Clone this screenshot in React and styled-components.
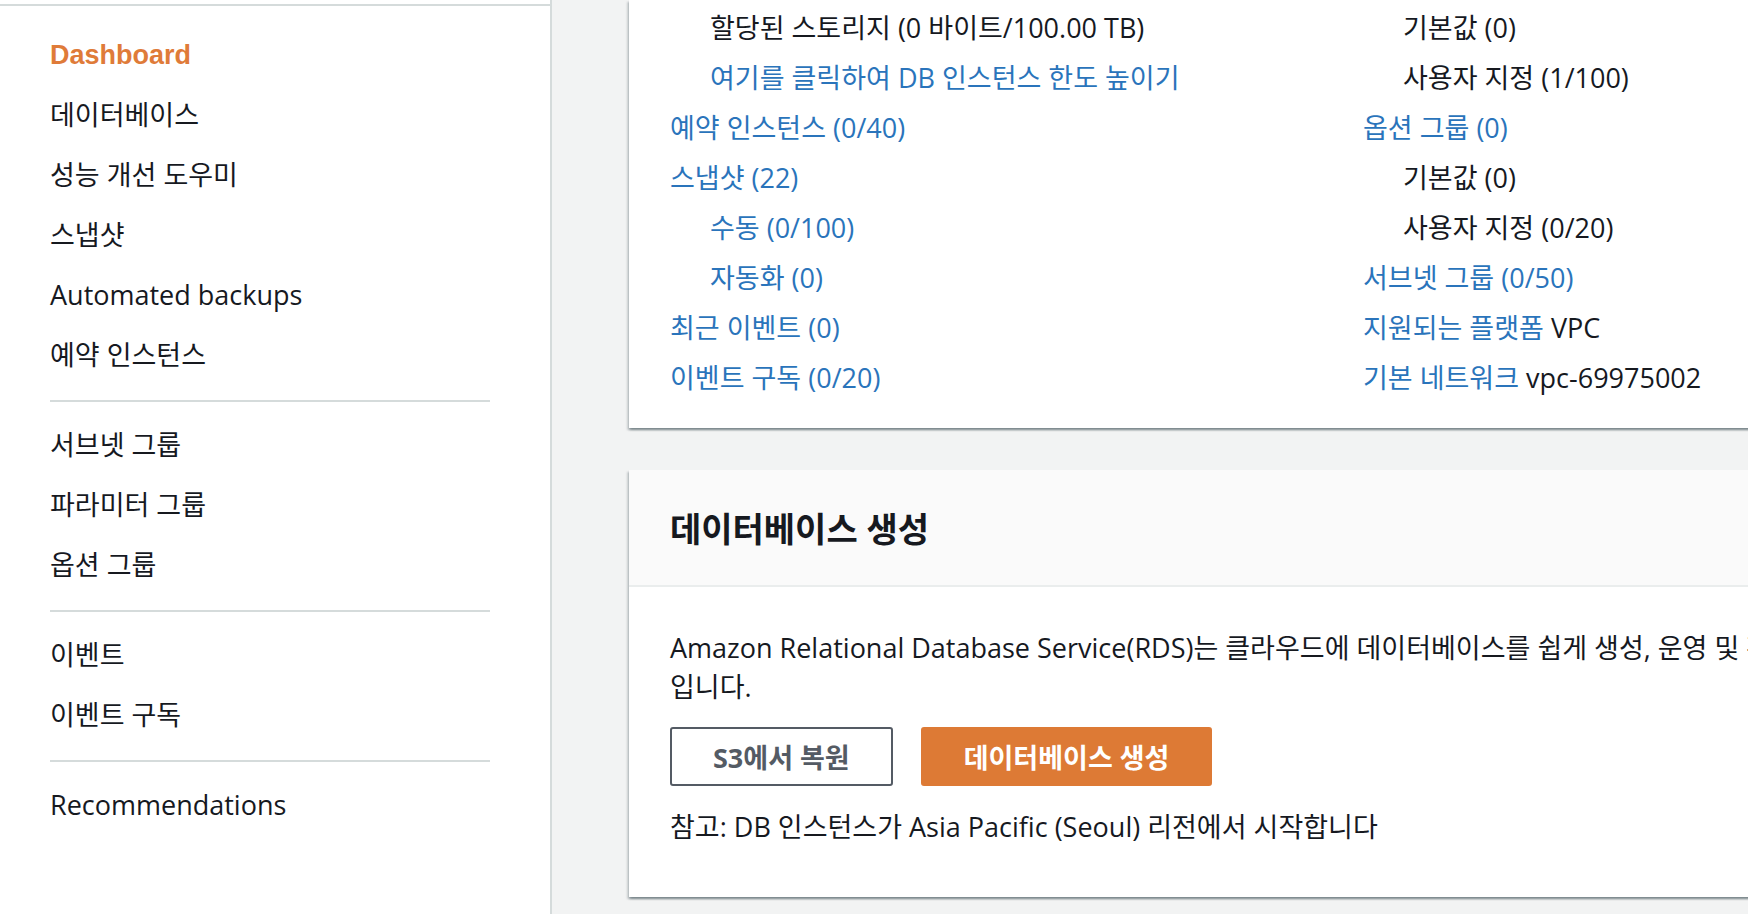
import React from 'react'
import styled, { createGlobalStyle } from 'styled-components'

const GlobalStyle = createGlobalStyle`
  html, body {
    margin: 0;
    padding: 0;
    overflow: hidden;
    background: #f2f3f3;
  }
  body {
    font-family: "Open Sans", "Noto Sans CJK KR", sans-serif;
    color: #16191f;
  }
`

const Page = styled.div`
  display: flex;
  height: 914px;
  width: 100%;
`

const Sidebar = styled.nav`
  flex: 0 0 550px;
  background: #fff;
  border-right: 2px solid #d5dbdb;
  padding-top: 4px;
`

const SidebarTopLine = styled.div`
  height: 2px;
  background: #d5dbdb;
`

const NavList = styled.ul`
  list-style: none;
  margin: 0;
  padding: 19px 60px 0 50px;
`

const NavItem = styled.li`
  height: 60px;
  line-height: 60px;
  font-size: 27px;
  white-space: nowrap;
  color: ${p => (p.$active ? '#df7b39' : '#16191f')};
  font-weight: ${p => (p.$active ? 700 : 400)};
  font-family: ${p => (p.$active ? '"Liberation Sans", "Noto Sans CJK KR", sans-serif' : 'inherit')};
`

const NavDivider = styled.li`
  height: 2px;
  background: #d5dbdb;
  margin: 15px 0 13px;
`

const Main = styled.main`
  flex: 1;
  min-width: 0;
  padding-left: 77px;
  overflow: hidden;
`

const Card = styled.section`
  width: 1500px;
  background: #fff;
  box-shadow: 0 2px 2px 0 rgba(0, 28, 36, 0.3), 2px 2px 2px 0 rgba(0, 28, 36, 0.15),
    -2px 2px 2px 0 rgba(0, 28, 36, 0.15);
  margin-bottom: 42px;
`

const ResourceGrid = styled.div`
  display: grid;
  grid-template-columns: 693px 1fr;
  padding: 3px 0 25px 41px;
`

const Column = styled.div`
  display: flex;
  flex-direction: column;
`

const Row = styled.div`
  height: 50px;
  line-height: 50px;
  font-size: 27px;
  white-space: nowrap;
  padding-left: ${p => (p.$indent ? '40px' : '0')};
`

const Link = styled.a`
  color: #2a74bb;
  text-decoration: none;
  cursor: pointer;
`

const CardHeader = styled.header`
  height: 115px;
  display: flex;
  align-items: center;
  padding-left: 41px;
  background: #fafafa;
  border-bottom: 2px solid #eaeded;
`

const CardTitle = styled.h2`
  margin: 0;
  font-size: 34px;
  font-weight: 700;
  color: #16191f;
`

const CardBody = styled.div`
  padding: 41px 0 50px 41px;
`

const Description = styled.p`
  margin: 0;
  font-size: 27px;
  line-height: 39px;
  white-space: nowrap;
`

const Actions = styled.div`
  display: flex;
  gap: 28px;
  margin: 21px 0;
`

const Button = styled.button`
  height: 59px;
  padding: 0 41px;
  border-radius: 3px;
  font-family: inherit;
  font-size: 27px;
  font-weight: 700;
  cursor: pointer;
  border: 2px solid ${p => (p.$primary ? '#dd7a35' : '#545b64')};
  background: ${p => (p.$primary ? '#dd7a35' : '#fff')};
  color: ${p => (p.$primary ? '#fff' : '#545b64')};
`

const Note = styled.p`
  margin: 0;
  font-size: 27px;
  line-height: 40px;
  white-space: nowrap;
`

const navGroups = [
  ['Dashboard', '데이터베이스', '성능 개선 도우미', '스냅샷', 'Automated backups', '예약 인스턴스'],
  ['서브넷 그룹', '파라미터 그룹', '옵션 그룹'],
  ['이벤트', '이벤트 구독'],
  ['Recommendations'],
]

const leftRows = [
  { text: '할당된 스토리지 (0 바이트/100.00 TB)', indent: true },
  { link: '여기를 클릭하여 DB 인스턴스 한도 높이기', indent: true },
  { link: '예약 인스턴스 (0/40)' },
  { link: '스냅샷 (22)' },
  { link: '수동 (0/100)', indent: true },
  { link: '자동화 (0)', indent: true },
  { link: '최근 이벤트 (0)' },
  { link: '이벤트 구독 (0/20)' },
]

const rightRows = [
  { text: '기본값 (0)', indent: true },
  { text: '사용자 지정 (1/100)', indent: true },
  { link: '옵션 그룹 (0)' },
  { text: '기본값 (0)', indent: true },
  { text: '사용자 지정 (0/20)', indent: true },
  { link: '서브넷 그룹 (0/50)' },
  { link: '지원되는 플랫폼', text: ' VPC' },
  { link: '기본 네트워크', text: ' vpc-69975002' },
]

const ResourceRow = ({ row }) => (
  <Row $indent={row.indent}>
    {row.link && <Link>{row.link}</Link>}
    {row.text}
  </Row>
)

const App = () => {
  return (
    <>
      <GlobalStyle />
      <Page>
        <Sidebar>
          <SidebarTopLine />
          <NavList>
            {navGroups.map((group, gi) => (
              <React.Fragment key={gi}>
                {gi > 0 && <NavDivider />}
                {group.map(item => (
                  <NavItem key={item} $active={item === 'Dashboard'}>
                    {item}
                  </NavItem>
                ))}
              </React.Fragment>
            ))}
          </NavList>
        </Sidebar>
        <Main>
          <Card>
            <ResourceGrid>
              <Column>
                {leftRows.map((r, i) => <ResourceRow key={i} row={r} />)}
              </Column>
              <Column>
                {rightRows.map((r, i) => <ResourceRow key={i} row={r} />)}
              </Column>
            </ResourceGrid>
          </Card>
          <Card>
            <CardHeader>
              <CardTitle>데이터베이스 생성</CardTitle>
            </CardHeader>
            <CardBody>
              <Description>
                Amazon Relational Database Service(RDS)는 클라우드에 데이터베이스를 쉽게 생성, 운영 및 확장할 수 있게 해주는 웹 서비스
                <br />
                입니다.
              </Description>
              <Actions>
                <Button>S3에서 복원</Button>
                <Button $primary>데이터베이스 생성</Button>
              </Actions>
              <Note>참고: DB 인스턴스가 Asia Pacific (Seoul) 리전에서 시작합니다</Note>
            </CardBody>
          </Card>
        </Main>
      </Page>
    </>
  )
}

export default App
